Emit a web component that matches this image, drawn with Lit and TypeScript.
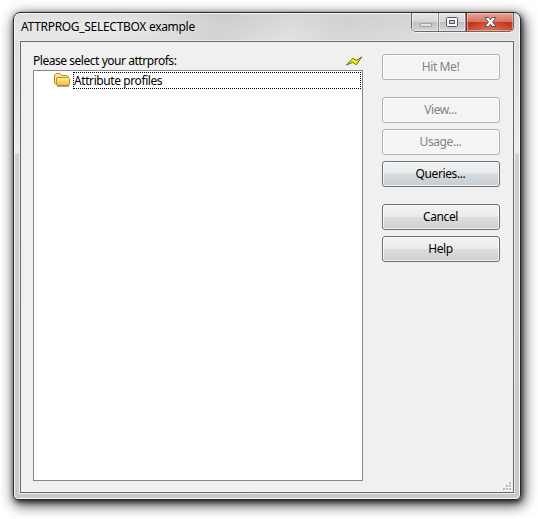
import { LitElement, html, css, svg } from "lit";
import { customElement, property } from "lit/decorators.js";

@customElement("push-button")
class PushButton extends LitElement {
  @property() label = "";
  @property() tone = "normal";

  static styles = css`
    :host { display: block; }
    .button {
      box-sizing: border-box; display: block; width: 118px; height: 26px; padding: 0 1px 1px 0;
      border: 1px solid #707070; border-radius: 3px; color: #000;
      background: linear-gradient(#f2f2f2 0, #ebebeb 48%, #dddddd 52%, #cfcfcf 100%);
      box-shadow: inset 0 0 0 1px rgba(255, 255, 255, .75);
      font: 12px/20px "Noto Sans", "Open Sans", sans-serif; letter-spacing: -0.4px; text-align: center;
    }
    .hot { border-color: #687278; background: linear-gradient(#f2f3f3 0, #e7eaeb 45%, #d6dade 52%, #c5ccd1 100%); }
    .disabled { color: #838383; border-color: #adb2b5; background: #f4f4f4; box-shadow: inset 0 0 0 1px #fafafa; }
  `;

  render() {
    return html`<button class="button ${this.tone}" ?disabled=${this.tone === "disabled"}>${this.label}</button>`;
  }
}

@customElement("app-root")
class AppRoot extends LitElement {
  static styles = css`
    :host {
      display: block; box-sizing: border-box; width: 538px; height: 519px; padding: 12px 17px 20px 13px;
      background: #fff; overflow: hidden; color: #000;
      font: 12px/16px "Noto Sans", "Open Sans", sans-serif;
    }
    .window {
      box-sizing: border-box; width: 508px; height: 488px; padding: 0 6px 6px;
      border: 1px solid #26282a; border-radius: 7px 7px 5px 5px;
      background:
        radial-gradient(ellipse 130px 24px at 90px 14px, rgba(255,255,255,.5), rgba(255,255,255,0)) 0 0 / 100% 28px no-repeat,
        linear-gradient(100deg, rgba(255,255,255,.2) 0, rgba(190,190,190,.35) 40%, rgba(255,255,255,.12) 55%, rgba(200,200,200,.3) 65%, rgba(255,255,255,.2) 100%) 0 0 / 100% 28px no-repeat,
        linear-gradient(#d2d2d2 0, #dedede 28px, #ebebeb 140px, #cfcfcf 141px, #c9c9c9 100%);
      box-shadow: inset 0 0 0 1px #fafafa, 1px 2px 5px rgba(0,0,0,.65), 2px 4px 14px 1px rgba(0,0,0,.75);
    }
    .titlebar { display: flex; justify-content: space-between; height: 28px; }
    .title { padding: 6px 0 0 1px; letter-spacing: -0.3px; white-space: nowrap; }
    .controls {
      box-sizing: border-box; display: flex; width: 103px; height: 19px;
      border: 1px solid #66686c; border-top: 0; border-radius: 0 0 5px 5px; overflow: hidden;
      box-shadow: 0 1px 0 rgba(255,255,255,.7);
    }
    .control {
      box-sizing: border-box; width: 27px; height: 18px; border-right: 1px solid #85878a;
      background: linear-gradient(#e4e4e4 0, #d6d6d6 48%, #bfc0c1 52%, #d4d4d4 100%);
      box-shadow: inset 0 0 0 1px rgba(255,255,255,.5);
    }
    .close {
      width: 47px; border-right: 0; border-left: 1px solid #7d3025;
      background: radial-gradient(ellipse at 50% 110%, rgba(244,140,95,.6), rgba(244,140,95,0) 65%), linear-gradient(#e5a498 0, #d9715f 48%, #bd311a 52%, #ce5238 100%);
      box-shadow: inset 0 0 0 1px rgba(255,205,190,.55);
    }
    .glyph { display: block; }
    .client {
      box-sizing: border-box; width: 494px; height: 452px; border: 1px solid #686868;
      background: #f0f0f0; display: flex; padding: 11px 13px 0 12px; justify-content: space-between; position: relative;
      box-shadow: 0 0 0 1px #eeeeee;
    }
    .left { width: 330px; }
    .heading { display: flex; justify-content: space-between; height: 17px; white-space: nowrap; }
    .label { letter-spacing: -0.46px; line-height: 15px; }
    .bolt { margin-top: 3px; }
    .list {
      box-sizing: border-box; width: 330px; height: 411px; border: 1px solid #828790;
      background: #fff; padding: 1px 1px 0 20px;
    }
    .row { display: flex; height: 18px; }
    .folder { flex: none; margin-right: 3px; }
    .item {
      box-sizing: border-box; flex: 1; height: 17px; border: 1px dotted #000;
      padding-left: 0; line-height: 15px; letter-spacing: -0.41px;
    }
    .buttons { display: flex; flex-direction: column; gap: 17px; padding-top: 1px; width: 118px; }
    .group { display: flex; flex-direction: column; gap: 6px; }
    .grip { position: absolute; right: 1px; bottom: 1px; }
  `;

  private groups = [
    [["Hit Me!", "disabled"]],
    [["View...", "disabled"], ["Usage...", "disabled"], ["Queries...", "hot"]],
    [["Cancel", "normal"], ["Help", "normal"]],
  ];

  private dots = [[6, 0], [3, 3], [6, 3], [0, 6], [3, 6], [6, 6]];

  render() {
    return html`
      <div class="window">
        <div class="titlebar">
          <div class="title">ATTRPROG_SELECTBOX example</div>
          <div class="controls">
            <div class="control">
              <svg class="glyph" width="27" height="18"><rect x="8.5" y="10.5" width="11" height="3" rx=".5" fill="#e3e3e3" stroke="#a0a1a3"/></svg>
            </div>
            <div class="control">
              <svg class="glyph" width="27" height="18">
                <rect x="7.5" y="4.5" width="11" height="9" rx="1" fill="#f8f8f8" stroke="#535666"/>
                <rect x="10.5" y="7.5" width="5" height="3" fill="#c9c9ca" stroke="#535666"/>
              </svg>
            </div>
            <div class="control close">
              <svg class="glyph" width="46" height="18">
                <path d="M18 4.5H21.5L23.5 6.8L25.5 4.5H29L25.6 9L29 13.5H25.3L23.5 11.2L21.7 13.5H18L21.4 9Z" fill="#fafafa" stroke="#535666" stroke-linejoin="round"/>
              </svg>
            </div>
          </div>
        </div>
        <div class="client">
          <div class="left">
            <div class="heading">
              <div class="label">Please select your attrprofs:</div>
              <svg class="bolt" width="17" height="12" viewBox="0 0 17 12">
                <path d="M.5 9L7 2.2L10 4.5L15.8 1L10 8.8L6.8 6.2Z" fill="#fff000" stroke="#6b6600" stroke-width="1"/>
              </svg>
            </div>
            <div class="list">
              <div class="row">
                <svg class="folder" width="16" height="16" viewBox="0 0 16 16">
                  <defs><linearGradient id="f" x2="0" y2="1"><stop stop-color="#fff3a4"/><stop offset="1" stop-color="#f0b93a"/></linearGradient></defs>
                  <path d="M.5 11V3L2 1.5H6L7.5 3.5H13L14.5 5V12L13.5 13.5H3Z" fill="#fbe694" stroke="#c08b20"/>
                  <path d="M3.5 13.5L2.5 12.5V6L3 5.5H14.5L15.5 6.5V12L14.5 13.5Z" fill="url(#f)" stroke="#c08b20"/>
                  <path d="M3 14.2H15" stroke="#8b651e" stroke-width=".8"/>
                </svg>
                <div class="item">Attribute profiles</div>
              </div>
            </div>
          </div>
          <div class="buttons">
            ${this.groups.map((g) => html`<div class="group">${g.map(([label, tone]) => html`<push-button label=${label} tone=${tone}></push-button>`)}</div>`)}
          </div>
          <svg class="grip" width="9" height="9">
            ${this.dots.map(([x, y]) => svg`<rect x=${x + 1} y=${y + 1} width="2" height="2" fill="#fff"/><rect x=${x} y=${y} width="2" height="2" fill="#b8b8b8"/>`)}
          </svg>
        </div>
      </div>`;
  }
}
